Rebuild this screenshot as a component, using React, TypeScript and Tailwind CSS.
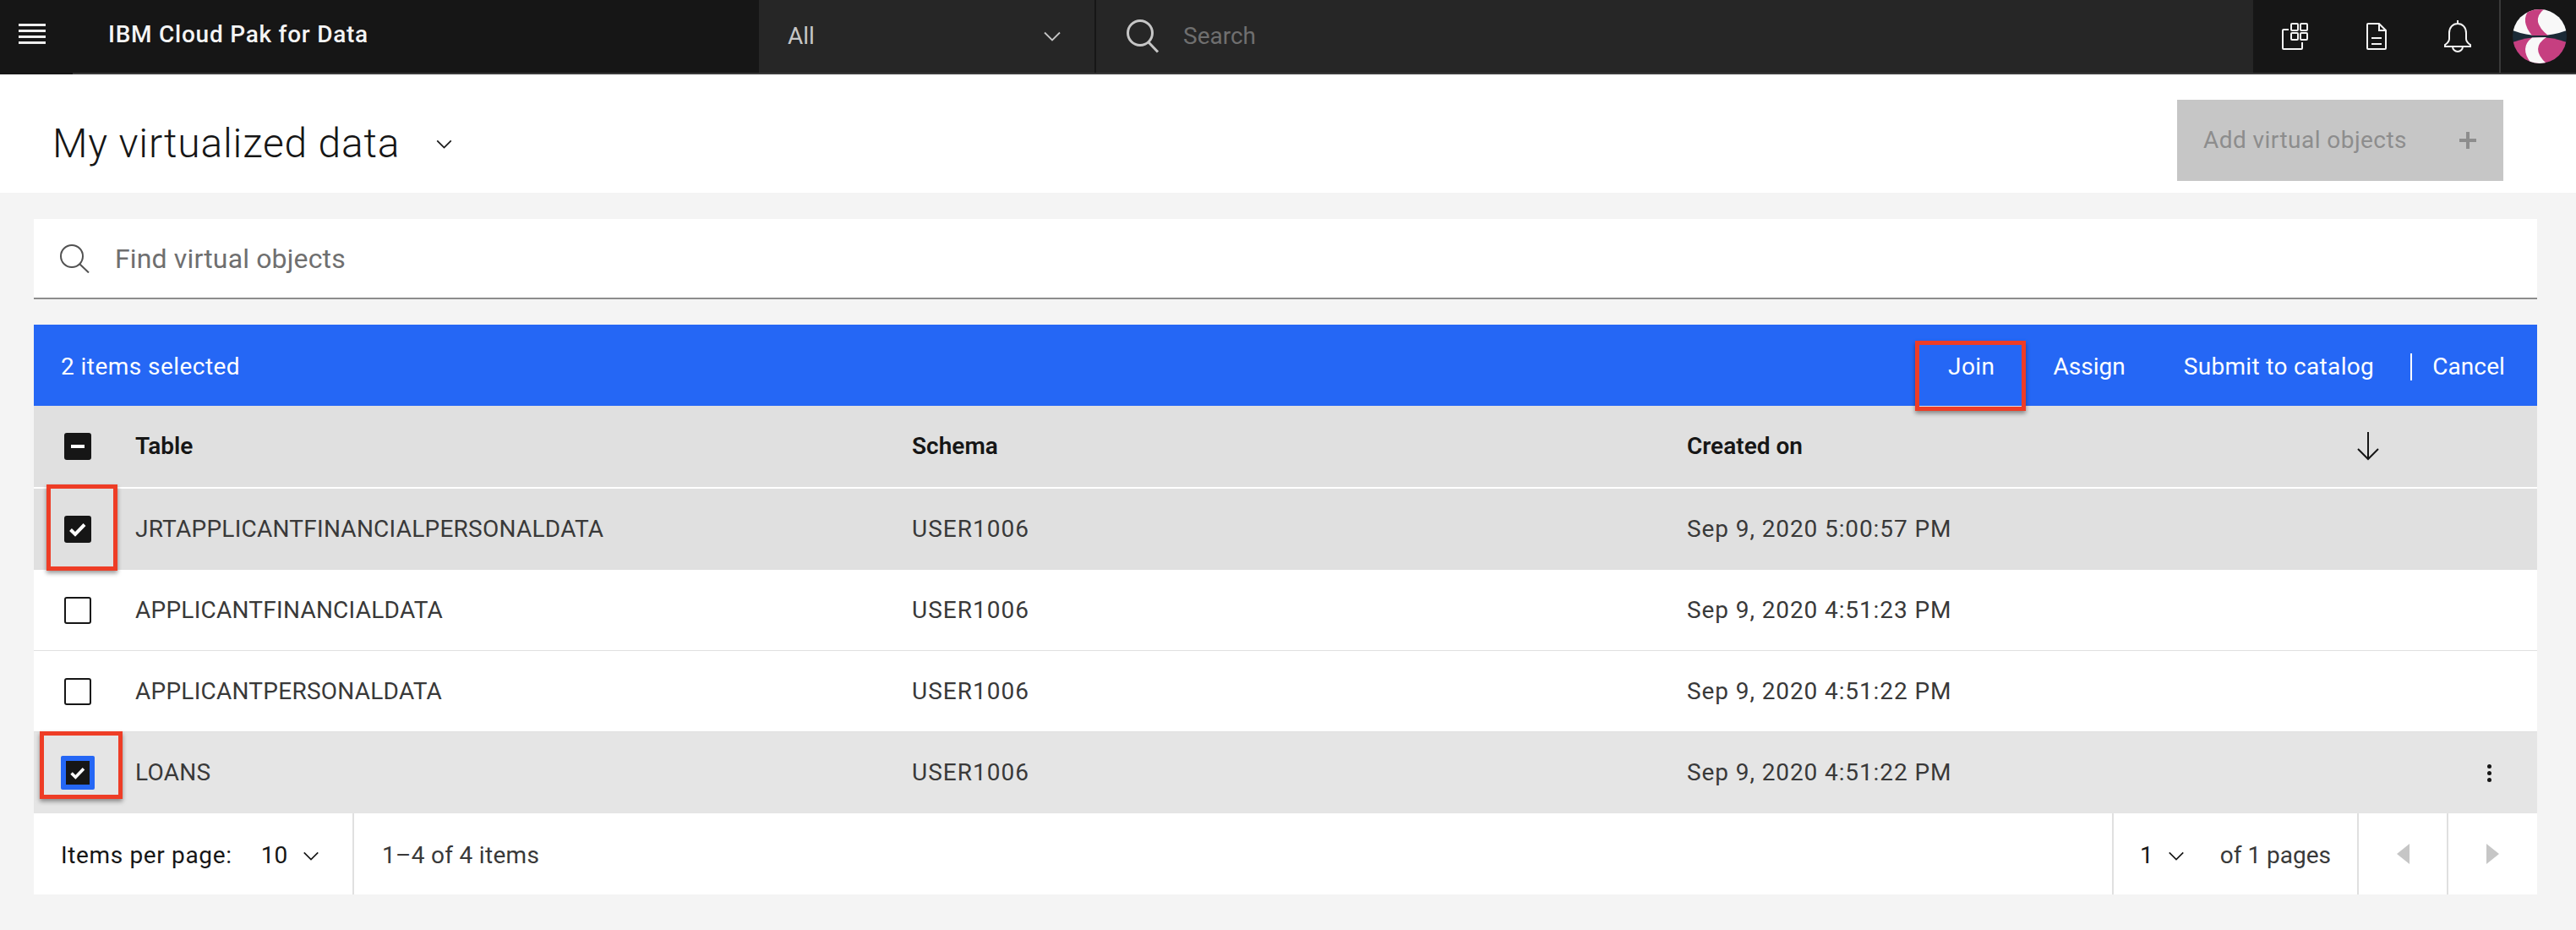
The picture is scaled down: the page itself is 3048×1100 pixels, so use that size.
const ROWS = [
  { name: 'JRTAPPLICANTFINANCIALPERSONALDATA', created: 'Sep 9, 2020 5:00:57 PM', state: 'checked' },
  { name: 'APPLICANTFINANCIALDATA', created: 'Sep 9, 2020 4:51:23 PM', state: 'empty' },
  { name: 'APPLICANTPERSONALDATA', created: 'Sep 9, 2020 4:51:22 PM', state: 'empty' },
  { name: 'LOANS', created: 'Sep 9, 2020 4:51:22 PM', state: 'focused' },
];

const FONT = "font-['Roboto','Noto_Sans',sans-serif]";

function Chevron({ className }: { className?: string }) {
  return (
    <svg viewBox="0 0 20 12" className={className} fill="none" stroke="currentColor" strokeWidth="1.8">
      <path d="M1 1.5 10 10.5 19 1.5" />
    </svg>
  );
}

function CheckMark() {
  return (
    <svg viewBox="0 0 32 32" className="h-8 w-8" fill="none" stroke="#fff" strokeWidth="4">
      <path d="M7.5 16.5 13 22 24 10.500" />
    </svg>
  );
}

function Checkbox({ state }: { state: string }) {
  if (state === 'empty') {
    return <div className="h-8 w-8 rounded-[3px] border-2 border-[#161616]" />;
  }
  if (state === 'focused') {
    return (
      <div className="-m-[4px] flex h-10 w-10 items-center justify-center rounded-[2px] bg-[#2567f5]">
        <div className="flex h-7 w-7 items-center justify-center overflow-hidden bg-[#161616]">
          <CheckMark />
        </div>
      </div>
    );
  }
  return (
    <div className="flex h-8 w-8 items-center justify-center rounded-[3px] bg-[#161616]">
      {state === 'mixed' ? <div className="h-[4px] w-4 bg-white" /> : <CheckMark />}
    </div>
  );
}

function TopBar() {
  return (
    <header className="flex h-[88px] text-[#f4f4f4]">
      <div className="flex h-[88px] w-[86px] flex-col gap-[4px] bg-[#161616] pl-[22px] pt-[28px]">
        <div className="h-[3px] w-8 bg-[#eeeeee]" />
        <div className="h-[3px] w-8 bg-[#eeeeee]" />
        <div className="h-[3px] w-8 bg-[#eeeeee]" />
        <div className="h-[3px] w-8 bg-[#eeeeee]" />
      </div>
      <div className="flex flex-1 border-b-2 border-[#393939]">
        <div className="flex w-[812px] items-center bg-[#161616] pb-1 pl-[42px] text-[28px] font-medium tracking-[0.75px]">
          IBM Cloud Pak for Data
        </div>
        <div className="flex w-[399px] items-center justify-between border-r-2 border-[#161616] bg-[#262626] pl-[34px] pr-[40px] text-[28px] text-[#c6c6c6]">
          All
          <Chevron className="h-[12px] w-[20px] text-[#c6c6c6]" />
        </div>
        <div className="flex flex-1 items-center bg-[#262626] pl-[35px] text-[28px] text-[#6f6f6f]">
          <svg viewBox="0 0 40 40" className="h-10 w-10" fill="none" stroke="#c6c6c6" strokeWidth="3">
            <circle cx="17" cy="16" r="14.500" />
            <path d="M27 27 38 38.500" />
          </svg>
          <span className="ml-[28px]">Search</span>
        </div>
        <div className="flex w-[291px] items-center bg-[#161616] pl-[34px]">
          <svg viewBox="0 0 32 32" className="h-8 w-8" fill="none" stroke="#f4f4f4" strokeWidth="2">
            <rect x="11" y="1" width="8" height="8" rx="1" />
            <rect x="22" y="1" width="8" height="8" rx="1" />
            <rect x="11" y="12" width="8" height="8" rx="1" />
            <rect x="22" y="12" width="8" height="8" rx="1" />
            <path d="M8 8H2a1 1 0 0 0-1 1v21a1 1 0 0 0 1 1h21a1 1 0 0 0 1-1v-7" />
          </svg>
          <svg viewBox="0 0 24 32" className="ml-[68px] h-8 w-6" fill="none" stroke="#f4f4f4" strokeWidth="2">
            <path d="M1 2a1 1 0 0 1 1-1h13l8 8v21a1 1 0 0 1-1 1H2a1 1 0 0 1-1-1Z" />
            <path d="M15 1v8h8M6 18h12M6 25h12" />
          </svg>
          <svg viewBox="0 0 34 40" className="ml-[67px] h-10 w-[34px]" fill="none" stroke="#f4f4f4" strokeWidth="2">
            <path d="M17 1v4M17 5c-6 0-10 4.500-10 11v7c0 3-2 5-5 7v2h30v-2c-3-2-5-4-5-7v-7c0-6.500-4-11-10-11Z" />
            <path d="M11 32a6 6 0 0 0 12 0" />
          </svg>
        </div>
        <div className="flex w-[91px] items-center border-l-2 border-[#393939] bg-[#161616] pl-[14px]">
          <svg viewBox="0 0 64 64" className="h-16 w-16">
            <defs>
              <clipPath id="avatar-clip">
                <circle cx="32" cy="32" r="32" />
              </clipPath>
            </defs>
            <g clipPath="url(#avatar-clip)">
              <rect width="64" height="64" fill="#1b2a36" />
              <path d="M0 0H64V25Q32 37 0 25Z" fill="#f8f8f8" />
              <path d="M20 0Q8.500 13.500 23 31H42Q20.500 13.500 37 0Z" fill="#c63f80" />
              <path d="M0 39Q32 27 64 39V64H0Z" fill="#c63f80" />
              <path d="M23 33.500Q7.500 45.500 22 64H40Q20 46 40 33Z" fill="#f8f8f8" />
            </g>
          </svg>
        </div>
      </div>
    </header>
  );
}

function PageTitle() {
  return (
    <div className="flex h-[140px] items-start bg-white pl-[62px] pr-[86px]">
      <h1 className="mt-[52px] text-[48px] font-light leading-[60px] tracking-[0.8px] text-[#161616]">My virtualized data</h1>
      <Chevron className="ml-[43px] mt-[77px] h-[11px] w-[19px] text-[#161616]" />
      <button className="ml-auto mt-[30px] flex h-24 w-[386px] items-center justify-between bg-[#c6c6c6] pl-[31px] pr-[32px] text-[28px] tracking-[0.45px] text-[#8d8d8d]">
        Add virtual objects
        <svg viewBox="0 0 20 20" className="h-5 w-5" fill="#8d8d8d">
          <path d="M8 0h4v8h8v4h-8v8H8v-8H0V8h8Z" />
        </svg>
      </button>
    </div>
  );
}

function ActionBar() {
  return (
    <div className="flex h-24 items-center bg-[#2567f5] pl-[32px] pt-[3px] text-[28px] text-white">
      <span className="tracking-[0.45px]">2 items selected</span>
      <div className="ml-auto flex items-center pr-[38px]">
        <span className="tracking-[0.45px]">Join</span>
        <span className="ml-[69px]">Assign</span>
        <span className="ml-[69px] tracking-[0.33px]">Submit to catalog</span>
        <span className="ml-[43px] h-8 w-[2px] bg-white" />
        <span className="ml-[24px] tracking-[0.1px]">Cancel</span>
      </div>
    </div>
  );
}

function DataTable() {
  return (
    <div className="text-[28px]">
      <div className="grid h-[98px] grid-cols-[120px_919px_917px_784px_1fr] items-center border-b-2 border-white bg-[#e0e0e0] font-semibold text-[#161616]">
        <div className="pl-[36px]">
          <Checkbox state="mixed" />
        </div>
        <div>Table</div>
        <div>Schema</div>
        <div>Created on</div>
        <svg viewBox="0 0 26 34" className="ml-[9px] h-[34px] w-[26px]" fill="none" stroke="#161616" strokeWidth="2">
          <path d="M13 0v32M1 20l12 12 12-12" />
        </svg>
      </div>
      {ROWS.map((row, i) => (
        <div
          key={row.name}
          className={`grid h-[96px] grid-cols-[120px_919px_917px_784px_1fr] items-center text-[#393939] ${
            i === 0 ? 'bg-[#e0e0e0]' : i === 3 ? 'bg-[#e5e5e5]' : 'border-b border-[#e0e0e0] bg-white'
          }`}
        >
          <div className="pl-[36px]">
            <Checkbox state={row.state} />
          </div>
          <div className="tracking-[0.25px]">{row.name}</div>
          <div className="tracking-[1px]">USER1006</div>
          <div className="tracking-[0.9px]">{row.created}</div>
          {i === 3 && (
            <div className="col-start-5 flex flex-col items-end gap-[3px] pr-[54px]">
              <span className="h-[5px] w-[5px] rounded-full bg-[#161616]" />
              <span className="h-[5px] w-[5px] rounded-full bg-[#161616]" />
              <span className="h-[5px] w-[5px] rounded-full bg-[#161616]" />
            </div>
          )}
        </div>
      ))}
    </div>
  );
}

function Pagination() {
  return (
    <div className="flex h-24 items-center bg-white text-[28px] text-[#393939]">
      <div className="flex h-full w-[379px] items-center border-r-2 border-[#e0e0e0] pl-[32px] pt-[4px]">
        <span className="tracking-[0.65px] text-[#161616]">Items per page:</span>
        <span className="ml-[34px] text-[#161616]">10</span>
        <Chevron className="ml-[18px] h-[11px] w-[20px] text-[#161616]" />
      </div>
      <span className="ml-[33px] mt-[4px] tracking-[0.3px]">1–4 of 4 items</span>
      <div className="ml-auto flex h-full">
        <div className="flex w-[292px] items-center border-x-2 border-[#e0e0e0] pl-[31px] pt-[4px]">
          <span className="text-[#161616]">1</span>
          <Chevron className="ml-[17px] h-[11px] w-[20px] text-[#161616]" />
          <span className="ml-[42px]">of 1 pages</span>
        </div>
        <div className="flex w-[106px] items-center justify-center border-r-2 border-[#e0e0e0]">
          <svg viewBox="0 0 15 24" className="h-6 w-[15px]" fill="#c6c6c6"><path d="M15 0v24L0 12Z" /></svg>
        </div>
        <div className="flex w-[105px] items-center justify-center">
          <svg viewBox="0 0 15 24" className="h-6 w-[15px]" fill="#c6c6c6"><path d="M0 0v24l15-12Z" /></svg>
        </div>
      </div>
    </div>
  );
}

// red callouts drawn over the screenshot
function Callout({ className }: { className: string }) {
  return <div className={`absolute border-[5px] border-[#ee3d26] shadow-[0_3px_5px_rgba(0,0,0,0.4)] ${className}`} />;
}

export default function App() {
  return (
    <div className={`relative min-h-[1100px] overflow-hidden bg-[#f4f4f4] ${FONT}`}>
      <TopBar />
      <PageTitle />
      <div className="pl-[40px] pr-[46px] pt-[31px]">
        <div className="flex h-[95px] items-center border-b-2 border-[#8d8d8d] bg-white pl-[31px] text-[32px] tracking-[0.15px] text-[#6f6f6f]">
          <svg viewBox="0 0 35 34" className="h-[34px] w-[35px]" fill="none" stroke="#525252" strokeWidth="2">
            <circle cx="14" cy="14" r="13" />
            <path d="M23.500 23.500 34 33.500" />
          </svg>
          <span className="ml-[30px]">Find virtual objects</span>
        </div>
        <div className="mt-[30px]">
          <ActionBar />
          <DataTable />
          <Pagination />
        </div>
      </div>
      <Callout className="left-[2266px] top-[403px] h-[83px] w-[131px]" />
      <Callout className="left-[55px] top-[573px] h-[102px] w-[84px]" />
      <Callout className="left-[47px] top-[865px] h-[80px] w-[98px]" />
    </div>
  );
}
